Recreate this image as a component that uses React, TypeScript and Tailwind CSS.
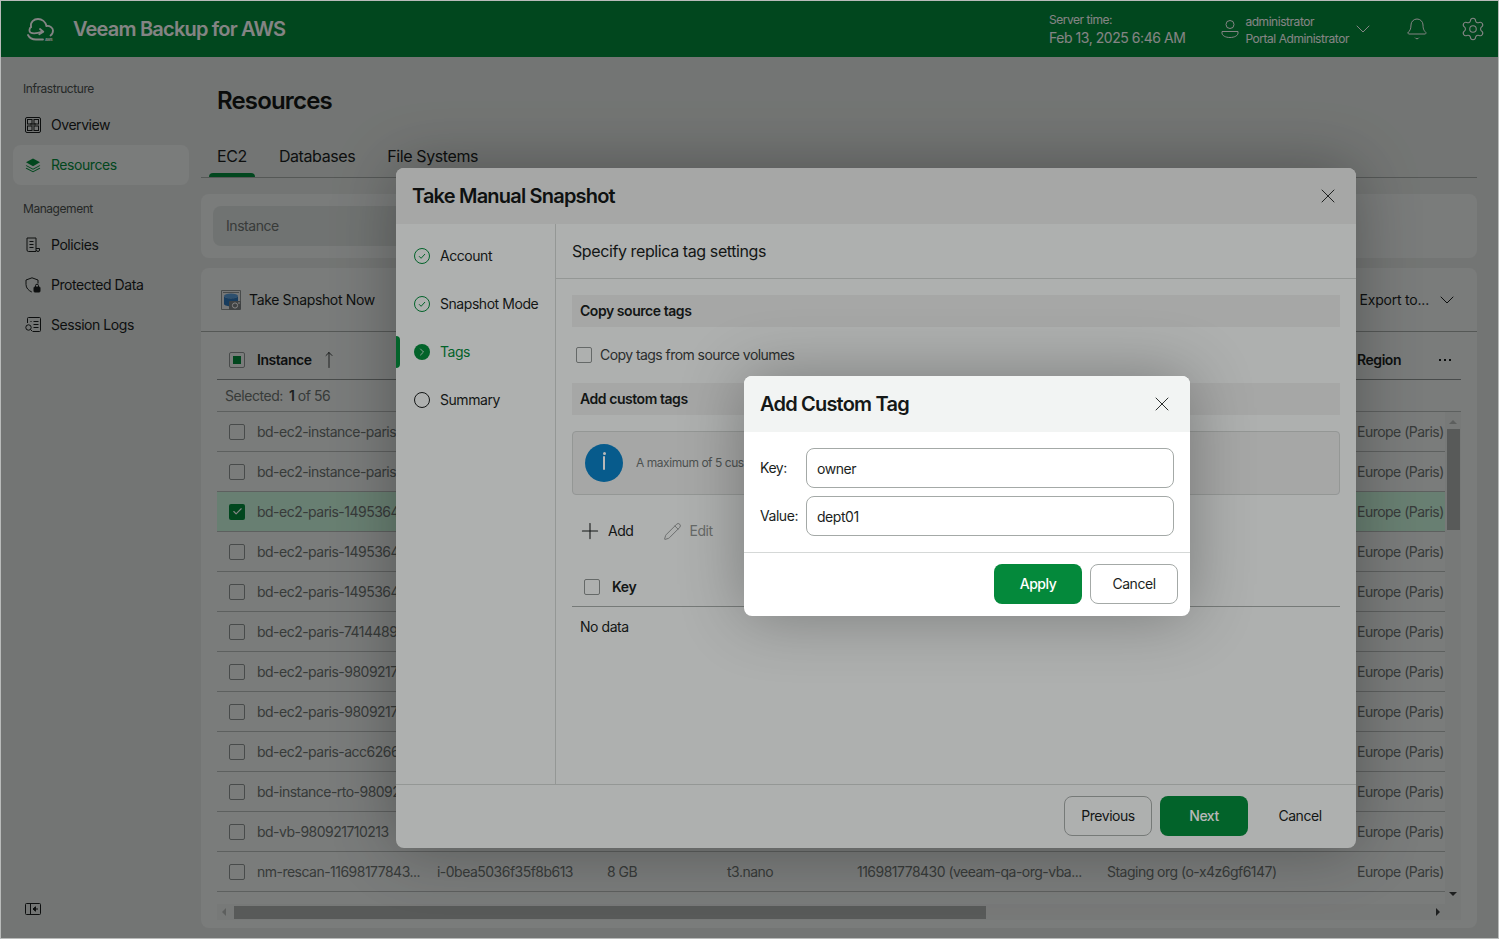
import React from "react";
import { Bell, Check, ChevronDown, ChevronRight, MoveUp, Pencil, Plus, Settings, X } from "lucide-react";

const rows = [
  { name: "bd-ec2-instance-paris" },
  { name: "bd-ec2-instance-paris" },
  { name: "bd-ec2-paris-1495364", selected: true },
  { name: "bd-ec2-paris-1495364" },
  { name: "bd-ec2-paris-1495364" },
  { name: "bd-ec2-paris-7414489" },
  { name: "bd-ec2-paris-9809217" },
  { name: "bd-ec2-paris-9809217" },
  { name: "bd-ec2-paris-acc6266" },
  { name: "bd-instance-rto-98092" },
  { name: "bd-vb-980921710213" },
  {
    name: "nm-rescan-11698177843...",
    id: "i-0bea5036f35f8b613",
    size: "8 GB",
    type: "t3.nano",
    account: "116981778430 (veeam-qa-org-vba...",
    org: "Staging org (o-x4z6gf6147)",
  },
];

const tableCols = "grid grid-cols-[40px_180px_170px_120px_130px_250px_250px_1fr] items-center";

function Box({ state }: { state?: "checked" | "partial" }) {
  if (state === "checked") {
    return (
      <span className="flex h-4 w-4 items-center justify-center rounded-[2px] bg-[#04893b] text-white">
        <Check size={11} strokeWidth={2.5} />
      </span>
    );
  }
  return (
    <span className="flex h-4 w-4 shrink-0 items-center justify-center rounded-[2px] border border-[#8d9290]">
      {state === "partial" && <span className="h-2 w-2 bg-[#04893b]" />}
    </span>
  );
}

function Logo() {
  return (
    <svg width="30" height="26" viewBox="0 0 30 26" fill="none" stroke="white" strokeWidth="1.8" strokeLinecap="round" strokeLinejoin="round">
      <path d="M4 11C3 6 7 3 11 3s7.5 3 8.5 7" />
      <path d="M19.5 10c3-.5 6.5 1.5 6.5 4.5 0 2-1 4-2.5 5" />
      <path d="M4 11C2 12.5 2 15.5 3.5 16.5 6 18 10 17.5 15.5 15.7" />
      <path d="M13 13l3.3 2.7-4 2.6" />
      <path d="M1 19c2 4 5 4.5 8 4.5h7" />
      <text x="18" y="25" fontSize="3.6" fill="white" stroke="none" fontFamily="Inter, sans-serif" fontWeight="700">AWS</text>
    </svg>
  );
}

function OverviewIcon() {
  return (
    <svg width="16" height="16" viewBox="0 0 16 16" fill="none" stroke="currentColor">
      <rect x="0.5" y="0.5" width="15" height="15" rx="1.5" />
      <rect x="2.5" y="2.5" width="4.5" height="4.5" />
      <rect x="9" y="2.5" width="4.5" height="4.5" />
      <rect x="2.5" y="9" width="4.5" height="4.5" />
      <rect x="9" y="9" width="4.5" height="4.5" />
      <rect x="5" y="6" width="6" height="2.5" fill="currentColor" fillOpacity="0.5" stroke="none" />
    </svg>
  );
}

function LayersIcon() {
  return (
    <svg width="16" height="16" viewBox="0 0 16 16" fill="currentColor">
      <path d="M8 1.5l7 3.8-7 3.9-7-3.9z" />
      <path d="M1.5 8.2L8 11.7l6.5-3.5.8.6L8 12.8.7 8.8z" />
      <path d="M1.5 10.8L8 14.2l6.5-3.4.8.6L8 15.3.7 11.4z" />
    </svg>
  );
}

function PoliciesIcon() {
  return (
    <svg width="16" height="16" viewBox="0 0 16 16" fill="none" stroke="currentColor" strokeLinejoin="round">
      <path d="M2 1h9v13.5H3.5A1.5 1.5 0 0 1 2 13z" />
      <path d="M4.5 4.5h4M4.5 7.5h4M4.5 10.5h4" />
      <path d="M11 11.5h3.5v1.5a1.5 1.5 0 0 1-3 0" />
    </svg>
  );
}

function ShieldIcon() {
  return (
    <svg width="16" height="16" viewBox="0 0 16 16" fill="none" stroke="currentColor">
      <path d="M7 .8l6 2.2v3.5M6.8 15C3.5 13.5 1 11 1 7.5V3l6-2.2" />
      <rect x="9" y="10" width="6" height="5" rx="0.8" fill="currentColor" />
      <path d="M10.5 10V8.7a1.5 1.5 0 0 1 3 0V10" />
    </svg>
  );
}

function LogsIcon() {
  return (
    <svg width="16" height="16" viewBox="0 0 16 16" fill="none" stroke="currentColor">
      <path d="M2.5 6V1.5a1 1 0 0 1 1-1h11a1 1 0 0 1 1 1v12a1 1 0 0 1-1 1H8" />
      <path d="M5.5 4.5h1M8.5 4.5h5M8.5 7.5h5M8.5 10.5h5" />
      <circle cx="3.5" cy="10.5" r="2.7" />
      <path d="M5.5 12.5l2 2" />
    </svg>
  );
}

function CollapseIcon() {
  return (
    <svg width="16" height="12" viewBox="0 0 16 12" fill="none" stroke="currentColor">
      <rect x="0.5" y="0.5" width="15" height="11" rx="1" />
      <path d="M5.5 .5v11" />
      <path d="M8 6h5" />
      <path d="M10.5 3.8L8 6l2.5 2.2z" fill="currentColor" />
    </svg>
  );
}

function SnapshotIcon() {
  return (
    <svg width="20" height="20" viewBox="0 0 20 20">
      <path d="M.5.5h19v12h-6v7H.5z" fill="#e4e6e6" stroke="#8b9091" />
      <rect x="2" y="2" width="16" height="1" fill="#8b9091" />
      <ellipse cx="10" cy="6" rx="7" ry="2.4" fill="#5b9bd5" />
      <path d="M3 6v8c0 1.2 3 2.2 6 2.3V12h8V6c0 1.4-3 2.4-7 2.4S3 7.4 3 6z" fill="#2e75b6" />
      <rect x="8" y="11" width="12" height="9" rx="1" fill="#7b8082" />
      <circle cx="14" cy="15.5" r="2.6" fill="none" stroke="white" />
      <rect x="17" y="12.5" width="2" height="1" fill="white" />
    </svg>
  );
}

function UserIcon() {
  return (
    <svg width="18" height="20" viewBox="0 0 18 20" fill="none" stroke="white">
      <circle cx="9" cy="5.5" r="4" />
      <path d="M1 12.5h16v1.5c0 2.6-3.4 4.5-8 4.5s-8-1.9-8-4.5z" />
    </svg>
  );
}

function StepDone() {
  return (
    <svg width="16" height="16" viewBox="0 0 16 16" fill="none" stroke="#04893b">
      <circle cx="8" cy="8" r="7.5" />
      <path d="M5 8.2l2.1 2.1L11 6" />
    </svg>
  );
}

function NavItem({ icon, label, active }: { icon: React.ReactNode; label: string; active?: boolean }) {
  return (
    <div
      className={`ml-3 flex h-10 w-[176px] items-center gap-2.5 rounded-lg pl-3 text-sm ${
        active ? "bg-[#ebefed] text-[#04893b]" : "text-[#1b1f1e]"
      }`}
    >
      {icon}
      {label}
    </div>
  );
}

function VScroll() {
  return (
    <div className="flex w-4 shrink-0 flex-col items-center bg-[#e6e9e8]">
      <span className="mt-2 h-0 w-0 border-x-4 border-b-4 border-x-transparent border-b-[#b3b7b6]" />
      <span className="mt-[5px] h-[101px] w-[13px] bg-[#a9adac]" />
      <span className="mt-auto mb-2 h-0 w-0 border-x-4 border-t-4 border-x-transparent border-t-[#3a3d3c]" />
    </div>
  );
}

function Page() {
  return (
    <>
      <header className="flex h-14 shrink-0 items-center bg-[#04893b] pr-3 pl-[26px] text-white">
        <Logo />
        <span className="ml-4 text-xl font-semibold tracking-[-0.04em]">Veeam Backup for AWS</span>
        <div className="ml-auto flex flex-col pt-px">
          <span className="text-xs leading-[16px]">Server time:</span>
          <span className="text-sm leading-[20px]">Feb 13, 2025 6:46 AM</span>
        </div>
        <div className="mr-1.5 ml-9">
          <UserIcon />
        </div>
        <div className="flex flex-col pt-0.5 text-xs leading-[17px]">
          <span>administrator</span>
          <span>Portal Administrator</span>
        </div>
        <ChevronDown size={24} strokeWidth={1} className="ml-0.5" />
        <Bell size={24} strokeWidth={1} className="ml-[30px]" />
        <Settings size={26} strokeWidth={1} className="ml-[31px]" />
      </header>

      <div className="flex min-h-0 flex-1">
        <aside className="flex w-[200px] shrink-0 flex-col pt-5 pb-[23px] text-[#1b1f1e]">
          <div className="mb-1 flex h-6 items-center pl-[22px] text-xs text-[#4a4f4d]">Infrastructure</div>
          <NavItem icon={<OverviewIcon />} label="Overview" />
          <NavItem icon={<LayersIcon />} label="Resources" active />
          <div className="mt-3 mb-1 flex h-6 items-center pl-[22px] text-xs text-[#4a4f4d]">Management</div>
          <NavItem icon={<PoliciesIcon />} label="Policies" />
          <NavItem icon={<ShieldIcon />} label="Protected Data" />
          <NavItem icon={<LogsIcon />} label="Session Logs" />
          <div className="mt-auto pl-6">
            <CollapseIcon />
          </div>
        </aside>

        <main className="mr-[21px] flex min-w-0 flex-1 flex-col">
          <h1 className="mt-7 h-8 pl-4 text-2xl leading-8 font-semibold tracking-[-0.035em] text-[#151817]">Resources</h1>
          <div className="mt-[19px] flex h-[42px] shrink-0 gap-4 border-b border-[#a4a9a7] pl-2 text-base tracking-[-0.025em] text-[#1b1f1e]">
            <div className="relative px-2 pt-2">
              EC2
              <span className="absolute right-0 bottom-0 left-0 h-1 rounded-t bg-[#04893b]" />
            </div>
            <div className="px-2 pt-2">Databases</div>
            <div className="px-2 pt-2">File Systems</div>
          </div>

          <section className="mt-4 h-16 shrink-0 rounded-lg bg-[#ebefed] p-3">
            <div className="flex h-10 w-[400px] items-center rounded-lg bg-[#d9dedc] pl-[13px] text-sm text-[#6c7270]">Instance</div>
          </section>

          <section className="mt-2.5 flex h-[660px] flex-col rounded-lg bg-[#ebefed]">
            <div className="flex h-16 shrink-0 items-center border-b border-[#a4a9a7] pr-[18px] pl-5 text-sm text-[#1b1f1e]">
              <SnapshotIcon />
              <span className="ml-2 tracking-[-0.025em]">Take Snapshot Now</span>
              <span className="ml-auto tracking-[-0.015em]">Export to...</span>
              <ChevronDown size={24} strokeWidth={1} className="ml-1.5" />
            </div>

            <div className="mx-4 mt-2 flex min-h-0 flex-1 flex-col">
              <div className={`${tableCols} h-10 shrink-0 border-b border-[#8d9290] text-sm font-semibold text-[#1b1f1e]`}>
                <span className="pl-3">
                  <Box state="partial" />
                </span>
                <span className="flex items-center gap-2">
                  Instance
                  <MoveUp size={18} strokeWidth={1.1} />
                </span>
                <span className="col-start-8 flex items-center justify-between pr-[10px]">
                  Region
                  <span className="flex gap-[3px]">
                    <span className="h-0.5 w-0.5 bg-[#1b1f1e]" />
                    <span className="h-0.5 w-0.5 bg-[#1b1f1e]" />
                    <span className="h-0.5 w-0.5 bg-[#1b1f1e]" />
                  </span>
                </span>
              </div>
              <div className="flex h-8 shrink-0 items-center gap-1.5 border-b border-[#b4b9b7] pl-2 text-sm text-[#6c7270]">
                Selected:
                <span>
                  <b className="font-semibold text-[#3c4140]">1</b> of 56
                </span>
              </div>
              <div className="flex">
                <div className="min-w-0 flex-1 pb-3">
                  {rows.map((r, i) => (
                    <div
                      key={i}
                      className={`${tableCols} h-10 border-b border-[#b4b9b7] text-sm tracking-[-0.037em] text-[#6c7270] ${r.selected ? "bg-[#c9f5dc]" : ""}`}
                    >
                      <span className="pl-3">
                        <Box state={r.selected ? "checked" : undefined} />
                      </span>
                      <span>{r.name}</span>
                      <span>{r.id}</span>
                      <span>{r.size}</span>
                      <span>{r.type}</span>
                      <span>{r.account}</span>
                      <span>{r.org}</span>
                      <span className="whitespace-nowrap">Europe (Paris)</span>
                    </div>
                  ))}
                </div>
                <VScroll />
              </div>
              <div className="flex h-4 shrink-0 items-center bg-[#e6e9e8]">
                <span className="ml-[5px] h-0 w-0 border-y-4 border-r-4 border-y-transparent border-r-[#b3b7b6]" />
                <span className="ml-[8px] h-[13px] w-[752px] bg-[#a9adac]" />
                <span className="mr-[21px] ml-auto h-0 w-0 border-y-4 border-l-4 border-y-transparent border-l-[#3a3d3c]" />
              </div>
            </div>
          </section>
        </main>
      </div>
    </>
  );
}

function Step({ label, state }: { label: string; state: "done" | "active" | "todo" }) {
  return (
    <div className={`relative flex h-12 items-center gap-2.5 pl-[18px] text-sm ${state === "active" ? "text-[#04893b]" : "text-[#1b1f1e]"}`}>
      {state === "active" && <span className="absolute top-2 left-0 h-8 w-1 rounded-r bg-[#04893b]" />}
      {state === "done" && <StepDone />}
      {state === "active" && (
        <span className="flex h-4 w-4 items-center justify-center rounded-full bg-[#04893b] text-white">
          <ChevronRight size={12} strokeWidth={1.5} />
        </span>
      )}
      {state === "todo" && <span className="h-4 w-4 rounded-full border border-[#1b1f1e]" />}
      {label}
    </div>
  );
}

function SnapshotDialog() {
  return (
    <div className="absolute top-[167px] left-[395px] flex h-[680px] w-[960px] flex-col overflow-hidden rounded-lg bg-[#f2f4f3] shadow-[0_0_64px_rgba(0,0,0,0.3)]">
      <div className="flex h-14 shrink-0 items-center justify-between bg-[#e6e8e7] pr-4 pl-4">
        <h2 className="text-xl font-semibold tracking-[-0.04em] text-[#151817]">Take Manual Snapshot</h2>
        <X size={24} strokeWidth={0.9} className="text-[#151817]" />
      </div>
      <div className="flex min-h-0 flex-1">
        <nav className="w-40 shrink-0 border-r border-[#cdd1cf] pt-2">
          <Step label="Account" state="done" />
          <Step label="Snapshot Mode" state="done" />
          <Step label="Tags" state="active" />
          <Step label="Summary" state="todo" />
        </nav>
        <div className="flex min-w-0 flex-1 flex-col">
          <div className="flex h-[55px] shrink-0 items-center border-b border-[#cdd1cf] pl-4 text-base tracking-[-0.025em] text-[#1b1f1e]">
            Specify replica tag settings
          </div>
          <div className="flex flex-col px-4 pt-4 text-sm text-[#1b1f1e]">
            <div className="flex h-8 items-center bg-[#e6e8e7] pl-2 font-semibold">Copy source tags</div>
            <div className="flex h-14 items-center gap-2 pl-1 tracking-[-0.04em] text-[#3c4140]">
              <Box />
              Copy tags from source volumes
            </div>
            <div className="flex h-8 items-center bg-[#e6e8e7] pl-2 font-semibold">Add custom tags</div>
            <div className="mt-4 flex h-16 items-center gap-[13px] rounded border border-[#cdd1cf] bg-[#e6e8e7] pl-3 text-xs text-[#6c7270]">
              <span className="flex h-[38px] w-[38px] shrink-0 items-center justify-center rounded-full bg-[#0a7fc2]">
                <span className="relative h-[14px] w-0.5 rounded bg-white">
                  <span className="absolute -top-1 left-[-0.5px] h-[3px] w-[3px] rounded-full bg-white" />
                </span>
              </span>
              <span className="whitespace-nowrap">A maximum of 5 cus</span>
            </div>
            <div className="mt-4 flex h-10 items-center pl-[5px]">
              <Plus size={26} strokeWidth={1} />
              <span className="ml-[5px]">Add</span>
              <Pencil size={19} strokeWidth={1} className="ml-[30px] text-[#7d8280]" />
              <span className="ml-[7px] text-[#8d9290]">Edit</span>
            </div>
            <div className="mt-4 flex h-10 items-center gap-3 border-b border-[#a4a9a7] pl-3 font-semibold">
              <Box />
              Key
            </div>
            <div className="flex h-10 items-center pl-2">No data</div>
          </div>
        </div>
      </div>
      <div className="flex h-16 shrink-0 items-start justify-end gap-2 border-t border-[#cdd1cf] pt-[11px] pr-3 text-sm">
        <button className="h-10 w-[88px] rounded-lg border border-[#a4a9a7] text-[#1b1f1e]">Previous</button>
        <button className="h-10 w-[88px] rounded-lg bg-[#04893b] font-medium text-white">Next</button>
        <button className="h-10 w-[88px] rounded-lg text-[#1b1f1e]">Cancel</button>
      </div>
    </div>
  );
}

function Field({ label, value }: { label: string; value: string }) {
  return (
    <div className="flex h-10 items-center">
      <span className="w-[46px] shrink-0 text-sm text-[#1b1f1e]">{label}</span>
      <input
        readOnly
        value={value}
        className="h-10 min-w-0 flex-1 rounded-lg border border-[#a4a9a7] bg-white pl-2.5 text-sm text-[#1b1f1e] outline-none"
      />
    </div>
  );
}

function TagDialog() {
  return (
    <div className="absolute top-[375px] left-[743px] flex h-[240px] w-[446px] flex-col overflow-hidden rounded-lg bg-white shadow-[0_0_64px_rgba(0,0,0,0.3)]">
      <div className="flex h-14 shrink-0 items-center justify-between bg-[#f2f4f3] pr-4 pl-4">
        <h2 className="text-xl font-semibold tracking-[-0.04em] text-[#151817]">Add Custom Tag</h2>
        <X size={24} strokeWidth={0.9} className="text-[#151817]" />
      </div>
      <div className="flex flex-col gap-2 px-4 pt-4 pb-4">
        <Field label="Key:" value="owner" />
        <Field label="Value:" value="dept01" />
      </div>
      <div className="flex flex-1 items-start justify-end gap-2 border-t border-[#d5d8d7] pt-[11px] pr-3 text-sm">
        <button className="h-10 w-[88px] rounded-lg bg-[#04893b] font-medium text-white">Apply</button>
        <button className="h-10 w-[88px] rounded-lg border border-[#a4a9a7] text-[#1b1f1e]">Cancel</button>
      </div>
    </div>
  );
}

export default function App() {
  return (
    <div className="relative h-[939px] w-[1499px] overflow-hidden border border-[#b9bbba] bg-[#dee2e0] font-[Inter,sans-serif] tracking-[-0.028em]">
      <div className="flex h-full flex-col">
        <Page />
      </div>
      <div className="absolute inset-0 bg-black/28" />
      <SnapshotDialog />
      <div className="absolute inset-0 bg-black/28" />
      <TagDialog />
    </div>
  );
}
